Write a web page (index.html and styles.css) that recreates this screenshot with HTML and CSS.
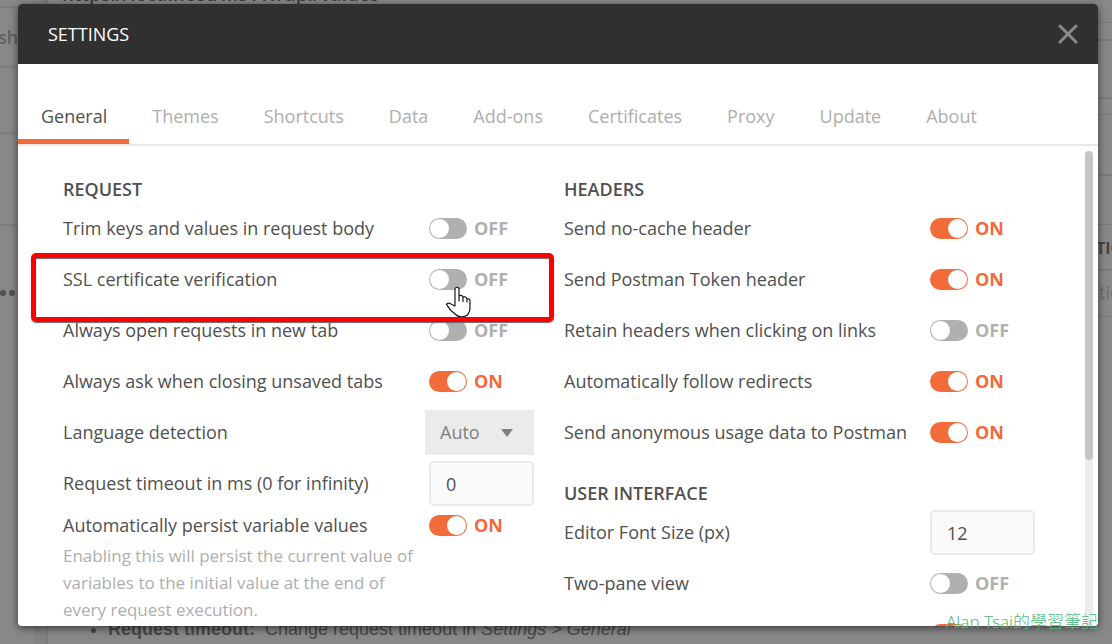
FILE: index.html
```html
<!DOCTYPE html>
<html lang="en">
<head>
<meta charset="utf-8">
<title>Settings</title>
<link rel="stylesheet" href="styles.css">
</head>
<body>
<div class="workspace" aria-hidden="true">
  <div class="rail">
    <div class="rail-cell rail-first"></div>
    <div class="rail-cell rail-text">sh</div>
    <div class="rail-cell rail-mid"></div>
    <div class="rail-cell rail-tall"></div>
    <div class="rail-dots"><i></i><i></i></div>
  </div>
  <div class="gutter"></div>
  <div class="doc">
    <p class="doc-url">https://localhost/MSTW/api/values</p>
    <ul class="doc-list"><li><b>Request timeout:</b> &nbsp;Change request timeout in <em>Settings &gt; General</em></li></ul>
  </div>
  <div class="edge">
    <div class="edge-cell edge-a"></div>
    <div class="edge-cell edge-b"></div>
    <div class="edge-cell edge-c"></div>
    <div class="edge-cell edge-d"></div>
    <div class="edge-cell edge-e"></div>
    <div class="edge-cell edge-f"></div>
    <div class="edge-cell edge-head">TION</div>
    <div class="edge-cell edge-text">ption</div>
  </div>
</div>

<div class="overlay">
  <div class="modal" role="dialog" aria-labelledby="title">
    <header class="modal-head">
      <h1 class="modal-title" id="title">SETTINGS</h1>
      <button class="close" type="button" aria-label="Close">
        <svg width="20" height="20" viewBox="0 0 20 20"><path d="M2 2 18 18M18 2 2 18" stroke="#8a8a8a" stroke-width="3" stroke-linecap="round"/></svg>
      </button>
    </header>
    <nav class="tabs">
      <button class="tab active" type="button">General</button>
      <button class="tab" type="button">Themes</button>
      <button class="tab" type="button">Shortcuts</button>
      <button class="tab" type="button">Data</button>
      <button class="tab" type="button">Add-ons</button>
      <button class="tab" type="button">Certificates</button>
      <button class="tab" type="button">Proxy</button>
      <button class="tab" type="button">Update</button>
      <button class="tab" type="button">About</button>
    </nav>
    <div class="modal-body">
      <div class="columns">
        <section class="column">
          <h2 class="group-title">REQUEST</h2>
          <div class="row"><label for="trim">Trim keys and values in request body</label><span class="switch"><input id="trim" type="checkbox"><span class="state"></span></span></div>
          <div class="row marked"><label for="ssl">SSL certificate verification</label><span class="switch"><input id="ssl" type="checkbox"><span class="state"></span></span>
            <svg class="pointer" width="26" height="32" viewBox="0 0 26 32"><path d="M10 20V3.500C10 0.500 14 0.500 14 3.500V10H17.500L21.500 12L25 14V22C25 26 23.500 27 22.500 29C19 31.500 13 31.500 10 28L6 24.500C4 22.500 3 20 1.500 18.500C2 16.500 4.500 17 6 18Z" fill="#fff"/><path d="M14 10V15M18 11.500V15.500M22 13V16M10 20V3.500C10 0.500 14 0.500 14 3.500V10C15 9 17.500 9 18 11.500C19.500 10.300 21.500 11 22 13C23.500 12.500 25 13 25 15V22C25 26 23.500 27 22.500 29C19 31.500 13 31.500 10 28L6 24.500C4 22.500 3 20 1.500 18.500C2 16.500 4.500 17 6 18L10 20" fill="none" stroke="#161628" stroke-width="1.200" stroke-linecap="round" stroke-linejoin="round"/></svg>
          </div>
          <div class="row"><label for="newtab">Always open requests in new tab</label><span class="switch"><input id="newtab" type="checkbox"><span class="state"></span></span></div>
          <div class="row"><label for="ask">Always ask when closing unsaved tabs</label><span class="switch"><input id="ask" type="checkbox" checked><span class="state"></span></span></div>
          <div class="row"><label for="lang">Language detection</label><span class="picker"><select id="lang" class="select"><option>Auto</option></select></span></div>
          <div class="row"><label for="timeout">Request timeout in ms (0 for infinity)</label><input id="timeout" class="field" type="text" value="0"></div>
          <div class="row short"><label for="persist">Automatically persist variable values</label><span class="switch"><input id="persist" type="checkbox" checked><span class="state"></span></span></div>
          <p class="note">Enabling this will persist the current value of variables to the initial value at the end of every request execution.</p>
        </section>
        <section class="column">
          <h2 class="group-title">HEADERS</h2>
          <div class="row"><label for="nocache">Send no-cache header</label><span class="switch"><input id="nocache" type="checkbox" checked><span class="state"></span></span></div>
          <div class="row"><label for="token">Send Postman Token header</label><span class="switch"><input id="token" type="checkbox" checked><span class="state"></span></span></div>
          <div class="row"><label for="retain">Retain headers when clicking on links</label><span class="switch"><input id="retain" type="checkbox"><span class="state"></span></span></div>
          <div class="row"><label for="follow">Automatically follow redirects</label><span class="switch"><input id="follow" type="checkbox" checked><span class="state"></span></span></div>
          <div class="row"><label for="usage">Send anonymous usage data to Postman</label><span class="switch"><input id="usage" type="checkbox" checked><span class="state"></span></span></div>
          <h2 class="group-title later">USER INTERFACE</h2>
          <div class="row"><label for="size">Editor Font Size (px)</label><input id="size" class="field" type="text" value="12"></div>
          <div class="row"><label for="pane">Two-pane view</label><span class="switch"><input id="pane" type="checkbox"><span class="state"></span></span></div>
          <div class="row"><span></span><span class="switch"><input type="checkbox" checked aria-label="Show icons"></span></div>
        </section>
      </div>
      <div class="track"><div class="thumb"></div></div>
    </div>
  </div>
</div>
<div class="watermark" lang="zh-Hant">Alan Tsai的學習筆記</div>
</body>
</html>
```
FILE: styles.css
```css
* { box-sizing: border-box; }
body {
  margin: 0;
  height: 100vh;
  overflow: hidden;
  position: relative;
  background: #888;
  font: 18px/27px "Open Sans", "Noto Sans", sans-serif;
  color: #505050;
}
button, input, select { font: inherit; }
h1, h2, p, ul { margin: 0; padding: 0; font-weight: 400; }

.workspace { display: flex; height: 100%; overflow: hidden; }
.rail { width: 34px; }
.rail-cell { border-bottom: 2px solid #7e7e7e; }
.rail-first { height: 8px; }
.rail-text { height: 60px; padding-top: 16px; font-weight: 600; color: #606060; text-indent: -2px; }
.rail-mid { height: 66px; }
.rail-tall { height: 92px; }
.rail-dots { display: flex; gap: 3px; padding-top: 64px; }
.rail-dots i { width: 6px; height: 6px; border-radius: 50%; background: #505050; }
.gutter { width: 14px; background: #828282; border-right: 2px solid #7b7b7b; }
.doc {
  flex: 1;
  display: flex;
  flex-direction: column;
  justify-content: space-between;
  padding-left: 14px;
  font-family: "Liberation Sans", Arial, sans-serif;
  color: #484848;
}
.doc-url { font: 600 19px/27px "Open Sans", sans-serif; margin-top: -19px; color: #3c3c3c; }
.doc-list { padding-left: 46px; margin-bottom: 1px; }
.edge { width: 16px; overflow: hidden; }
.edge-cell { border-bottom: 2px solid #7b7b7b; }
.edge-a { height: 23px; border-width: 1px; }
.edge-b { height: 18px; }
.edge-c { height: 58px; }
.edge-d { height: 16px; border-width: 1px; }
.edge-e { height: 61px; }
.edge-f { height: 49px; border-width: 1px; }
.edge-head { height: 46px; padding-top: 10px; font-weight: 700; font-size: 16px; color: #444; }
.edge-text { height: 46px; padding-top: 8px; color: #6b6b6b; border-width: 1px; text-indent: -8px; }

.overlay { position: absolute; inset: 0; z-index: 1; padding: 4px 14px 18px 18px; }
.overlay::before {
  content: "";
  position: absolute;
  inset: 4px 14px 18px 18px;
  z-index: -1;
  border-radius: 4px;
  box-shadow: 0 2px 8px rgba(0, 0, 0, .6);
}
.modal {
  display: flex;
  flex-direction: column;
  height: 100%;
  overflow: hidden;
  border-radius: 4px;
  background: #fff;
}
.modal-head {
  display: flex;
  flex: none;
  align-items: center;
  justify-content: space-between;
  height: 60px;
  padding: 0 20px 0 30px;
  background: #303030;
}
.modal-title { font-size: 18px; color: #fff; }
.close { display: flex; padding: 0; border: 0; background: none; }
.tabs { display: flex; flex: none; padding-top: 39px; border-bottom: 2px solid #e8e8e8; }
.tab {
  padding: 0 22px 9px 23px;
  border: 0;
  border-bottom: 5px solid transparent;
  background: none;
  color: #aeaeae;
  line-height: 27px;
}
.tab.active { border-color: #f26b3a; color: #505050; }

.modal-body { display: flex; flex: 1; min-height: 0; overflow: hidden; }
.columns {
  display: grid;
  grid-template-columns: 1fr 1fr;
  flex: 1;
  gap: 30px;
  padding: 30px 50px 0 45px;
}
.track { flex: none; width: 8px; margin: 5px 5px 0 0; background: #ececec; border-radius: 4px; }
.thumb { height: 65%; border-radius: 4px; background: #c5c5c5; }
.group-title { font-size: 18px; font-weight: 600; }
.group-title.later { margin-top: 22px; }
.row {
  display: grid;
  grid-template-columns: 1fr 105px;
  align-items: center;
  height: 51px;
  position: relative;
}
.row.short { height: 33px; }
.row label { white-space: nowrap; }
.switch { display: flex; align-items: center; gap: 7px; font-weight: 700; color: #b0b0b0; }
.switch input {
  appearance: none;
  display: flex;
  width: 38px;
  height: 21px;
  margin: 0;
  padding: 1px;
  border-radius: 11px;
  background: #b0b0b0;
}
.switch input::before { content: ""; width: 19px; height: 19px; border-radius: 50%; background: #fff; }
.switch input:checked { justify-content: flex-end; background: #f26b3a; }
.state::before { content: "OFF"; }
input:checked + .state { color: #f26b3a; }
input:checked + .state::before { content: "ON"; }
.field {
  width: 105px;
  height: 45px;
  padding: 0 15px;
  border: 2px solid #e9e9e9;
  border-radius: 5px;
  background: #fafafa;
  color: #505050;
}
.picker { position: relative; margin-left: -4px; }
.select {
  display: block;
  appearance: none;
  width: 100%;
  height: 45px;
  padding: 0 15px;
  border: 0;
  border-radius: 0;
  background: #ebebeb;
  color: #808080;
}
.picker::after {
  content: "";
  position: absolute;
  right: 21px;
  top: 19px;
  border: 6px solid transparent;
  border-top: 8px solid #808080;
  border-bottom: 0;
}
.note { max-width: 356px; font-size: 17px; color: #aeaeae; }
.marked::after {
  content: "";
  position: absolute;
  inset: -1px -20px -17px -32px;
  border: 5px solid #fe0000;
  border-radius: 5px;
  box-shadow: 0 1px 1px #666, inset 0 1px 1px #666;
  z-index: 1;
}
.pointer { position: absolute; right: 63px; top: 32px; }
.watermark {
  position: absolute;
  right: 14px;
  bottom: 10px;
  z-index: 2;
  font: 300 17px/24px "Noto Sans", "Noto Sans CJK TC", sans-serif;
  color: #4fb980;
}
```
